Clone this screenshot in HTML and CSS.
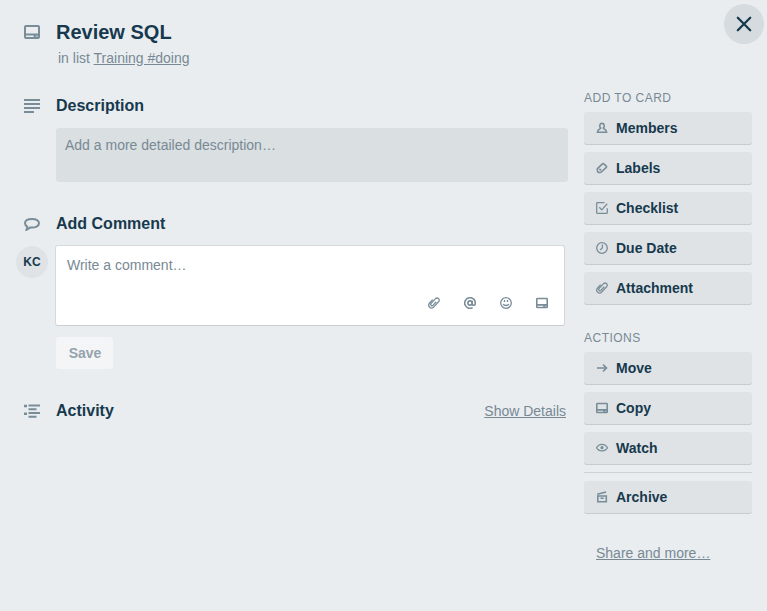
FILE: index.html
```html
<!DOCTYPE html>
<html lang="en">
<head>
<meta charset="utf-8">
<title>Review SQL</title>
<link rel="stylesheet" href="styles.css">
</head>
<body>
<svg class="sprite" aria-hidden="true">
  <symbol id="card" viewBox="0 0 16 14"><path d="M2 1h12q1 0 1 1v10q0 1-1 1H2q-1 0-1-1V2q0-1 1-1zM1 9.500h14M10.700 9.500V13"/><path class="solid" d="M11 10h4v3h-4z" opacity=".5"/></symbol>
  <symbol id="lines" viewBox="0 0 16 14"><path d="M0 1h16M0 5h16M0 9h16M0 13h10"/></symbol>
  <symbol id="bubble" viewBox="0 0 16 13"><path d="M8.300 1C4 1 1 2.700 1 5.300c0 1.400.8 2.500 2.200 3.300L2.500 11.800l4-2.400C11.500 9.900 15 8 15 5.200 15 2.700 12.200 1 8.300 1z"/></symbol>
  <symbol id="activity" viewBox="0 0 16 14"><path d="M4.500 1.500H16M4.500 5.200H12.500M4.500 9H16M4.500 12.700H12.500"/><path class="solid" d="M0 .8h3v2.500H0zM0 8.500h3V11H0z"/></symbol>
  <symbol id="clip" viewBox="0 0 12 12"><path d="M4.700 2.600 1.600 6C.4 7.500.5 9.200 1.700 10.300c1.200 1.100 3 .9 4.200-.4l4.700-5.100c.9-1 .8-2.400-.1-3.200-1-.8-2.300-.7-3.200.3L3.200 6.400c-.6.700-.6 1.500 0 2s1.400.4 2-.3l3-3.400"/></symbol>
  <symbol id="at" viewBox="0 0 12 12"><path d="M8.600 10.600A5.300 5.300 0 1 1 11.300 6c0 1.500-.5 2.300-1.400 2.300S8.200 7.600 8.200 6.500V3.800"/><circle cx="6" cy="6" r="2.100"/></symbol>
  <symbol id="smile" viewBox="0 0 12 12"><circle cx="6" cy="6" r="5.300"/><path d="M4.500 3v2M7.500 3v2M3.200 7c.8 2 4.800 2 5.600 0"/></symbol>
  <symbol id="member" viewBox="0 0 12 12"><path d="M4.700 6.200C2.900 4.500 3.700 1.400 6 1.400s3.100 3.100 1.300 4.800c.4 1 3.300.9 3.300 4.100H1.400c0-3.200 2.900-3.100 3.300-4.100z"/></symbol>
  <symbol id="label" viewBox="0 0 12 12"><path d="M6.400 1.900 1.700 6.300q-.5.500-.4 1.200l.3 2.200q.1.700.8.700l1.700.1q.7 0 1.200-.5l5-4.600q.6-.7 0-1.300L7.800 1.900q-.7-.6-1.400 0z"/><path d="M3.400 6.800 5 8.300"/></symbol>
  <symbol id="check" viewBox="0 0 12 12"><path d="M8.500.7H1.200q-.5 0-.5.5v9.600q0 .5.500.5h9.600q.5 0 .5-.5V6.300M3.300 5.200l2.500 2.700 5.400-6.200"/></symbol>
  <symbol id="clock" viewBox="0 0 12 12"><circle cx="6" cy="6" r="5.300"/><path d="M6.400 2.500V6L4 8"/></symbol>
  <symbol id="arrow" viewBox="0 0 12 12"><path d="M1 6h9.500M7 2.500 10.500 6 7 9.500"/></symbol>
  <symbol id="eye" viewBox="0 0 12 12"><path d="M.6 5.800C2.700 1.200 9.300 1.200 11.400 5.800 9.300 10 2.700 10 .6 5.800z"/><circle class="solid" cx="6" cy="5.700" r="1.600"/></symbol>
  <symbol id="archive" viewBox="0 0 12 12"><path d="M1.800 5h8.500v5.800H1.800zM1.200 3.300l8.900-2.300M4.500 7.300h3.200"/></symbol>
</svg>
<div class="card-window">
  <button class="close" aria-label="Close"><svg class="close-icon" viewBox="0 0 16 16"><path d="M1.800 1.800l12.400 12.400M14.200 1.800L1.800 14.200"/></svg></button>
  <header class="card-header">
    <svg class="icon i-card"><use href="#card"/></svg>
    <div>
      <h1>Review SQL</h1>
      <p class="in-list">in list <a>Training #doing</a></p>
    </div>
  </header>
  <div class="columns">
    <main>
      <section class="description">
        <div class="heading"><svg class="icon"><use href="#lines"/></svg><h2>Description</h2></div>
        <div class="description-box">Add a more detailed description…</div>
      </section>
      <section class="comment">
        <div class="heading"><svg class="icon i-bubble"><use href="#bubble"/></svg><h2>Add Comment</h2></div>
        <div class="comment-row">
          <span class="avatar">KC</span>
          <div class="comment-box">
            <span>Write a comment…</span>
            <div class="tools">
              <svg class="small"><use href="#clip"/></svg>
              <svg class="small tool-bold"><use href="#at"/></svg>
              <svg class="small"><use href="#smile"/></svg>
              <svg class="small small-card"><use href="#card"/></svg>
            </div>
          </div>
        </div>
        <button class="save">Save</button>
      </section>
      <section class="heading activity">
        <svg class="icon"><use href="#activity"/></svg><h2>Activity</h2><a class="details">Show Details</a>
      </section>
    </main>
    <aside>
      <h3>ADD TO CARD</h3>
      <div class="group">
        <a class="action"><svg class="small tool-bold"><use href="#member"/></svg>Members</a>
        <a class="action"><svg class="small tool-bold"><use href="#label"/></svg>Labels</a>
        <a class="action"><svg class="small"><use href="#check"/></svg>Checklist</a>
        <a class="action"><svg class="small"><use href="#clock"/></svg>Due Date</a>
        <a class="action"><svg class="small"><use href="#clip"/></svg>Attachment</a>
      </div>
      <h3 class="second">ACTIONS</h3>
      <div class="group">
        <a class="action"><svg class="small tool-bold"><use href="#arrow"/></svg>Move</a>
        <a class="action"><svg class="small small-card"><use href="#card"/></svg>Copy</a>
        <a class="action"><svg class="small"><use href="#eye"/></svg>Watch</a>
      </div>
      <hr>
      <a class="action"><svg class="small tool-bold"><use href="#archive"/></svg>Archive</a>
      <a class="share">Share and more…</a>
    </aside>
  </div>
</div>
</body>
</html>
```
FILE: styles.css
```css
* { box-sizing: border-box; }
body {
  margin: 0;
  background: #e9edf0;
  color: #17394d;
  font: 14px/20px "Liberation Sans", Arial, sans-serif;
}
h1, h2, h3, p { margin: 0; }
.sprite { position: absolute; width: 0; height: 0; }
svg { display: block; flex: none; fill: none; stroke: #798d99; stroke-width: 2; }
.solid { fill: #798d99; stroke: none; }
.card-window { position: relative; height: 611px; padding: 20px 15px 0 16px; }
.close {
  position: absolute; top: 4px; right: 3px;
  display: flex; align-items: center; justify-content: center;
  width: 40px; height: 40px; padding: 0;
  border: 0; border-radius: 50%; background: #d5dbdf;
}
.close-icon { width: 16px; height: 16px; stroke: #17394d; stroke-width: 2.3; stroke-linecap: round; }
.card-header { display: flex; height: 68px; }
.icon { width: 16px; height: 14px; margin: 0 16px 0 8px; }
.i-card { margin-top: 5px; }
h1 { font-size: 20px; line-height: 24px; }
.in-list { margin: 4px 0 0 2px; color: #788994; }
.in-list a, .details, .share { text-decoration: underline; }
.columns { display: flex; gap: 16px; }
main { width: 552px; }
.heading { display: flex; align-items: center; height: 36px; }
h2 { font-size: 16px; line-height: 20px; }
.i-bubble { height: 13px; margin-top: 1px; }
.description-box {
  height: 54px; margin: 4px 0 0 40px; padding: 7px 9px;
  border-radius: 3px; background: #dadfe2; color: #788994;
}
.comment { padding-top: 24px; }
.comment-row { display: flex; margin-top: 3px; gap: 7px; }
.avatar {
  width: 32px; height: 32px; margin-top: 1px; border-radius: 50%;
  background: #dfe3e6; font-size: 12px; font-weight: bold; line-height: 32px; text-align: center;
}
.comment-box {
  display: flex; flex-direction: column; justify-content: space-between;
  width: 510px; height: 81px; padding: 9px 16px 16px 11px;
  border: 1px solid #d3dadd; border-bottom-color: #c8cfd4; border-radius: 3px;
  background: #fff; color: #788994;
}
.tools { display: flex; justify-content: flex-end; gap: 24px; }
.small { width: 12px; height: 12px; stroke-width: 1.3; }
.tool-bold { stroke-width: 1.6; }
.small-card { stroke-width: 2.2; }
.save {
  display: block; width: 57px; height: 32px; margin: 11px 0 0 40px; padding: 0 0 0 1px;
  border: 0; border-radius: 3px; background: #f4f5f7;
  color: #94a3ad; font: bold 14px/32px "Liberation Sans", Arial, sans-serif;
}
.activity { height: 34px; margin-top: 25px; }
.details { margin: -1px 2px 0 auto; color: #788994; }
aside { width: 168px; }
h3 {
  padding-top: 2px; margin-bottom: 6px;
  color: #788994; font-size: 12px; font-weight: normal; line-height: 16px; letter-spacing: .04em;
}
h3.second { margin-top: 23px; }
.group { display: flex; flex-direction: column; gap: 7px; }
.action {
  display: flex; align-items: center; gap: 8px;
  height: 33px; padding: 0 12px 1px;
  border-radius: 3px; background: #dfe3e6; box-shadow: inset 0 -1px 0 #c5ccd2;
  font-weight: bold;
}
hr { height: 1px; margin: 7px 0 8px; border: 0; background: #cbd3d9; }
.share { display: inline-block; margin: 29px 0 0 12px; color: #788994; }
```
